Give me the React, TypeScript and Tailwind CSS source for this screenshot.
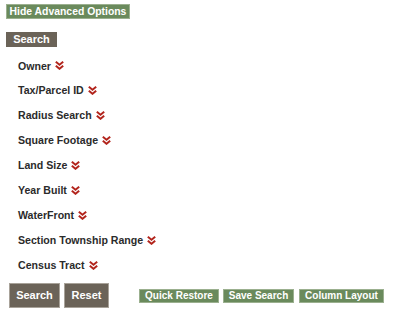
import React from "react";

const Chev = () => (
  <svg width="9" height="9" viewBox="0 0 9 9" className="ml-[4px] shrink-0 -mt-[1px]">
    <path d="M0.8 0.8 L4.5 3.8 L8.2 0.8" stroke="#b3261e" strokeWidth="2" fill="none" />
    <path d="M0.8 4.8 L4.5 7.8 L8.2 4.8" stroke="#b3261e" strokeWidth="2" fill="none" />
  </svg>
);

const items = [
  "Owner",
  "Tax/Parcel ID",
  "Radius Search",
  "Square Footage",
  "Land Size",
  "Year Built",
  "WaterFront",
  "Section Township Range",
  "Census Tract",
];

export default function App() {
  return (
    <div
      className="w-[410px] h-[314px] bg-white flex flex-col"
      style={{ fontFamily: '"Liberation Sans", Arial, sans-serif' }}
    >
      <div className="flex pt-[4px] pl-[6px]">
        <div className="flex items-center justify-center bg-[#6a8a5c] text-white font-bold text-[10.4px] h-[15px] w-[124px] border border-[#9bb08f]">
          Hide Advanced Options
        </div>
      </div>
      <div className="flex pt-[13px] pl-[6px]">
        <div className="flex items-center justify-center bg-[#6b6358] text-white font-bold text-[11px] h-[15px] w-[51px]">
          Search
        </div>
      </div>
      <div className="pl-[18px] pt-[7px] flex flex-col">
        {items.map((t) => (
          <div key={t} className="flex items-center h-[24.9px] text-[10.6px] font-bold text-[#2b2b2b]">
            <span>{t}</span>
            <Chev />
          </div>
        ))}
      </div>
      <div className="flex items-center pl-[9px] pt-[5px]">
        <div className="flex items-center justify-center bg-[#6b6358] text-white font-bold text-[11px] h-[25px] w-[51px] border border-[#a8a299]">
          Search
        </div>
        <div className="ml-[4px] flex items-center justify-center bg-[#6b6358] text-white font-bold text-[11px] h-[25px] w-[45px] border border-[#a8a299]">
          Reset
        </div>
        <div className="ml-[30px] flex items-center justify-center bg-[#6a8a5c] text-white font-bold text-[10px] h-[14px] w-[80px] border border-[#9bb08f]">
          Quick Restore
        </div>
        <div className="ml-[4px] flex items-center justify-center bg-[#6a8a5c] text-white font-bold text-[10px] h-[14px] w-[71px] border border-[#9bb08f]">
          Save Search
        </div>
        <div className="ml-[5px] flex items-center justify-center bg-[#6a8a5c] text-white font-bold text-[10px] h-[14px] w-[85px] border border-[#9bb08f]">
          Column Layout
        </div>
      </div>
    </div>
  );
}
